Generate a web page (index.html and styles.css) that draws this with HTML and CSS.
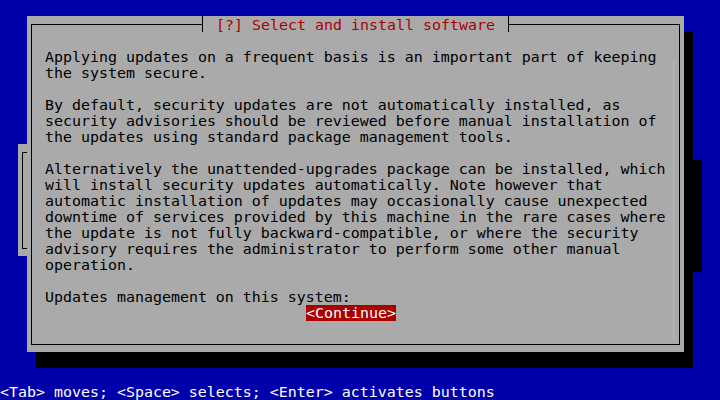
FILE: index.html
```html
<!DOCTYPE html>
<html lang="en">
<head>
  <meta charset="UTF-8">
  <title>Select and install software</title>
  <link rel="stylesheet" href="styles.css">
</head>
<body>
  <div class="screen">
    <!-- window left behind the dialog -->
    <div class="window back">
      <div class="list-bracket"></div>
    </div>

    <div class="window dialog">
      <div class="frame">
        <div class="title-row">
          <span class="title"><span class="tee tee-left"></span> [?] Select and install software <span class="tee tee-right"></span></span>
        </div>

        <p>Applying updates on a frequent basis is an important part of keeping
the system secure.</p>
        <p>By default, security updates are not automatically installed, as
security advisories should be reviewed before manual installation of
the updates using standard package management tools.</p>
        <p>Alternatively the unattended-upgrades package can be installed, which
will install security updates automatically. Note however that
automatic installation of updates may occasionally cause unexpected
downtime of services provided by this machine in the rare cases where
the update is not fully backward-compatible, or where the security
advisory requires the administrator to perform some other manual
operation.</p>
        <p class="last">Updates management on this system:</p>
        <div class="buttons">
          <span class="button active">&lt;Continue&gt;</span>
        </div>
      </div>
    </div>

    <div class="help">&lt;Tab&gt; moves; &lt;Space&gt; selects; &lt;Enter&gt; activates buttons</div>
  </div>
</body>
</html>
```

FILE: styles.css
```css
body {
  margin: 0;
  background: #0000aa;
}

/* 80 x 25 text console, 9x16 cells */
.screen {
  display: grid;
  grid-template-columns: repeat(80, 9px);
  grid-template-rows: repeat(25, 16px);
  width: 720px;
  height: 400px;
  overflow: hidden;
  font-family: "DejaVu Sans Mono", "Liberation Mono", monospace;
  font-size: 14.95px;
  line-height: 16px;
  color: #000;
}

.window {
  background: #aaaaaa;
  box-shadow: 9px 16px 0 #000;
}

.back {
  grid-column: 3 / 78;
  grid-row: 10 / 17;
}

.list-bracket {
  margin: 8px 0 7px 4px;
  height: 95px;
  border: 1px solid #000;
  border-right: none;
}

.dialog {
  grid-column: 4 / 77;
  grid-row: 2 / 23;
  display: flex;
}

.frame {
  position: relative;
  flex: 1;
  margin: 8px 4px 7px 4px;
  border: 1px solid #000;
  padding: 24px 0 0 13px;
}

/* faint scroll track along the right edge */
.frame::after {
  content: "";
  position: absolute;
  right: 5px;
  top: 36px;
  bottom: 3px;
  width: 1px;
  background: #b9b9b9;
}

.title-row {
  position: absolute;
  top: -9px;
  left: 0;
  right: 0;
  height: 16px;
  text-align: center;
}

.title {
  display: inline-flex;
  background: #aaaaaa;
  color: #aa0000;
  white-space: pre;
  padding-top: 1px;
  height: 15px;
}

.tee {
  display: inline-block;
  width: 9px;
  height: 16px;
  margin-top: -1px;
}

.tee-left {
  background:
    linear-gradient(#000, #000) 4px 0 / 1px 16px no-repeat,
    linear-gradient(#000, #000) 0 8px / 5px 1px no-repeat;
}

.tee-right {
  background:
    linear-gradient(#000, #000) 4px 0 / 1px 16px no-repeat,
    linear-gradient(#000, #000) 4px 8px / 5px 1px no-repeat;
}

p {
  margin: 0 0 16px;
  white-space: pre;
}

p.last {
  margin-bottom: 0;
}

.buttons {
  margin-left: 261px;
  height: 16px;
}

.button {
  display: inline-block;
  white-space: pre;
}

.button.active {
  background: #aa0000;
  color: #ffffff;
}

.help {
  grid-column: 1 / -1;
  grid-row: 25;
  height: 16px;
  color: #ffffff;
  white-space: pre;
}
```
